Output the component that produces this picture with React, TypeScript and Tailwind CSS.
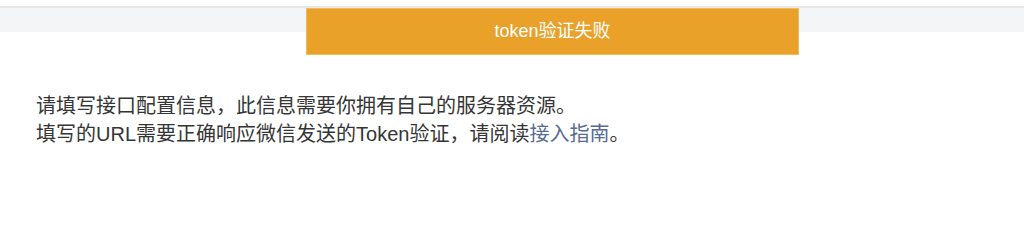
export default function App() {
  return (
    <div
      className="relative w-full h-[210px] bg-white overflow-hidden"
      style={{ fontFamily: '"Liberation Sans", "Noto Sans CJK SC", sans-serif' }}
    >
      {/* top header edge */}
      <div className="h-[6px] w-[905px] bg-white shadow-[0_1px_2px_rgba(0,0,0,0.06)]" />
      <div className="h-[2px] bg-[#e6e7ea]" />
      <div className="h-[24px] bg-[#f4f5f7]" />

      {/* toast */}
      <div className="absolute left-[306px] top-[8px] w-[493px] h-[47px] bg-[#e9a12a] border border-[#f2bb5a] flex items-center justify-center text-white text-[18px]">
        token验证失败
      </div>

      <div className="mt-[60px] pl-[36px] text-[20px] leading-[28px] text-[#353535]">
        <p>请填写接口配置信息，此信息需要你拥有自己的服务器资源。</p>
        <p>
          填写的URL需要正确响应微信发送的Token验证，请阅读
          <a className="text-[#576b95]">接入指南</a>。
        </p>
      </div>
    </div>
  );
}
